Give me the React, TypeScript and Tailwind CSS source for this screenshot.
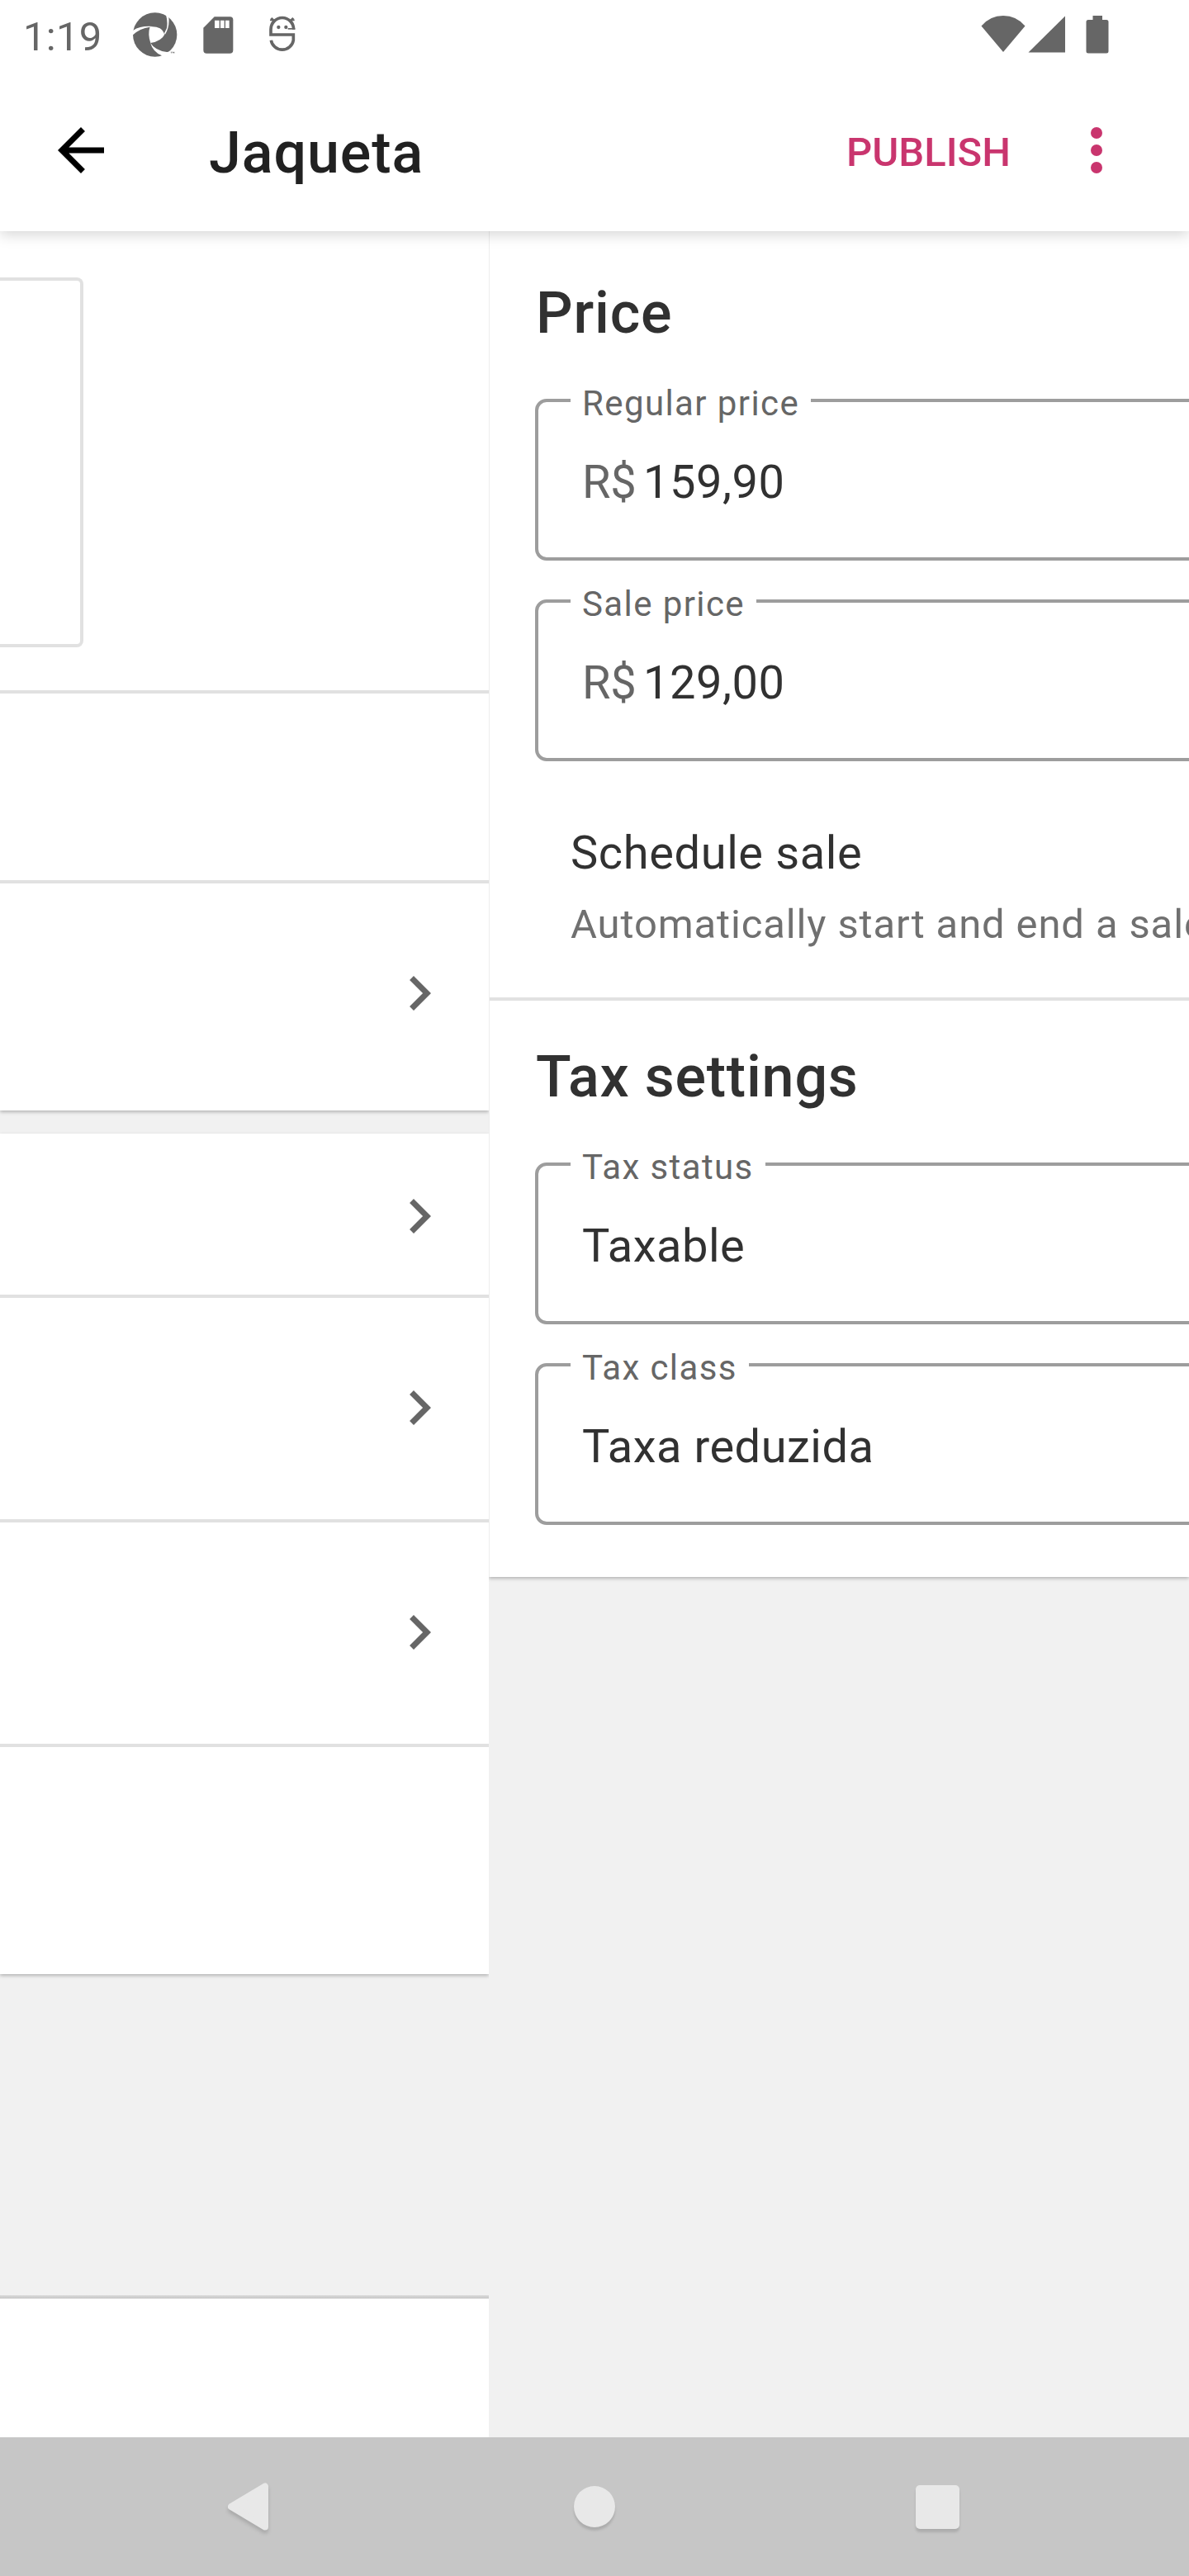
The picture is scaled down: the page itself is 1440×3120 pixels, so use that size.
import type { ReactNode } from "react";

function ApertureIcon() {
  return (
    <svg className="h-[54px] w-[54px]" viewBox="482 46 162 162">
      <circle cx="562" cy="127" r="80" fill="#666666" />
      <path
        fill="#ffffff"
        d="M544 98 Q565 96 580 104 Q590 110 597 126 Q586 150 546 157 Q535 125 544 98Z"
      />
      <path fill="#ffffff" d="M480 113 Q508 94 553 97 L544 99 Q505 104 480 130Z" />
      <path fill="#ffffff" d="M598 44 L602 55 Q609 80 605 103 L596 122 L599 126 Q616 97 612 64 L620 50Z" />
      <path fill="#ffffff" d="M545 156 Q562 184 605 190 L645 185 L645 210 L580 210 L587 203 Q555 190 545 156Z" />
      <path fill="#666666" d="M619 189h6v1.5h-2v4h-2v-4h-2zM626 189h2l1.500 3 1.500-3h2v5.500h-1.500v-3l-2 3-2-3v3h-1.500z" />
    </svg>
  );
}

function SdCardIcon() {
  return (
    <svg className="h-[45px] w-[37px]" viewBox="738 59 111 135">
      <path
        fill="#666666"
        d="M779 60 H836 Q847 60 847 72 V181 Q847 193 835 193 H751 Q739 193 739 181 V100 Z"
      />
      <path fill="#ffffff" d="M780 73h17v28h-17zM801 73h14v28h-14zM819 73h14v28h-14z" />
    </svg>
  );
}

function FaceIcon() {
  return (
    <svg className="h-[46px] w-[34px]" viewBox="974 58 102 138">
      <g fill="none" stroke="#666666" strokeWidth="11">
        <path d="M1066 108 A41 42 0 0 0 983 108 V127 H1065 V147 A41 41 0 0 1 984 147" />
        <path d="M1045 105.500 H1071" strokeWidth="5" />
        <path d="M984 67 L995 78 M1065 67 L1054 78" strokeWidth="9" />
        <path d="M980 74 H992 M1057 74 H1069" strokeWidth="5" />
      </g>
      <circle cx="1011" cy="100" r="6.500" fill="#666666" />
      <circle cx="1038" cy="100" r="6.500" fill="#666666" />
    </svg>
  );
}

function StatusBar() {
  return (
    <div className="flex h-[84px] items-start justify-between pr-[97px] pl-[28px]">
      <div className="flex">
        <span className="mt-2 w-[133px] text-[49px] leading-[73px] tracking-[0.3px] text-[#666666]">
          1:19
        </span>
        <div className="mt-[15px]">
          <ApertureIcon />
        </div>
        <div className="mt-5 ml-[31px]">
          <SdCardIcon />
        </div>
        <div className="mt-[19px] ml-[42px]">
          <FaceIcon />
        </div>
      </div>
      <div className="mt-[19px] flex">
        <svg className="h-[46px] w-[54px]" viewBox="0 0 54 46" fill="#666666">
          <path d="M27 44 L0.500 12.500 Q11 0 27 0 Q43 0 53.500 12.500Z" />
        </svg>
        <svg className="ml-[3px] h-[46px] w-[46px]" viewBox="0 0 46 46" fill="#666666">
          <path d="M0.500 44.500 L45 0.500 V44.500Z" />
        </svg>
        <svg className="ml-[24px] h-[46px] w-[28px]" viewBox="0 0 28 46" fill="#666666">
          <path d="M8.500 0 H20 V5 H25 Q27.500 5 27.500 7.500 V43 Q27.500 45.500 25 45.500 H3 Q0.500 45.500 0.500 43 V7.500 Q0.500 5 3 5 H8.500Z" />
        </svg>
      </div>
    </div>
  );
}

function Toolbar() {
  return (
    <div className="flex h-[196px] items-center">
      <svg className="ml-[56px] h-[84px] w-[84px]" viewBox="0 0 24 24">
        <path d="M20 11H7.830l5.590-5.590L12 4l-8 8 8 8 1.410-1.410L7.830 13H20v-2z" fill="#000000" />
      </svg>
      <h1 className="mt-[6px] ml-[113px] flex-1 text-[70px] leading-[82px] font-medium tracking-[0.9px] text-[#212121]">
        Jaqueta
      </h1>
      <button className="mt-[5px] w-[198px] text-left text-[49px] leading-[57px] font-medium whitespace-nowrap text-[#c9356e]">
        PUBLISH
      </button>
      <div className="mr-[105px] ml-[98px] flex flex-col gap-[7px]">
        <span className="size-[14px] rounded-full bg-[#c9356e]" />
        <span className="size-[14px] rounded-full bg-[#c9356e]" />
        <span className="size-[14px] rounded-full bg-[#c9356e]" />
      </div>
    </div>
  );
}

function Chevron() {
  return (
    <svg className="mr-[42px] ml-auto h-[84px] w-[84px]" viewBox="0 0 24 24">
      <path d="M10 6L8.590 7.410 13.170 12l-4.580 4.590L10 18l6-6z" fill="#666666" />
    </svg>
  );
}

const cardShadow = "shadow-[0_2px_4px_rgba(0,0,0,0.25)]";

function ProductPage() {
  return (
    <div className="flex w-[592px] shrink-0 flex-col overflow-hidden">
      <div className={`bg-white ${cardShadow}`}>
        <div className="h-[560px] border-b-4 border-[#e1e1e1] pt-[56px]">
          <div className="h-[448px] w-[101px] rounded-r-[8px] border-4 border-l-0 border-[#e1e1e1]" />
        </div>
        <div className="h-[230px] border-b-4 border-[#e1e1e1]" />
        <div className="h-[275px] pt-[91px]">
          <Chevron />
        </div>
      </div>
      <div className={`mt-[28px] bg-white ${cardShadow}`}>
        <div className="h-[199px] border-b-4 border-[#e1e1e1] pt-[58px]">
          <Chevron />
        </div>
        <div className="h-[272px] border-b-4 border-[#e1e1e1] pt-[91px]">
          <Chevron />
        </div>
        <div className="h-[272px] border-b-4 border-[#e1e1e1] pt-[91px]">
          <Chevron />
        </div>
        <div className="h-[275px]" />
      </div>
      <div className="mt-auto h-[172px] bg-white">
        <div className="h-1 bg-linear-to-b from-[#d9d9d9] to-[#c8c8c8]" />
      </div>
    </div>
  );
}

function Field({ label, children }: { label: string; children: ReactNode }) {
  return (
    <div className="relative h-[196px] w-[1000px] rounded-[14px] border-4 border-[#9d9d9d] pt-[61px] pl-[53px]">
      <span className="absolute -top-[23px] left-[39px] bg-white px-[14px] text-[42px] leading-[49px] tracking-[1.4px] whitespace-nowrap text-[#666666]">
        {label}
      </span>
      <div className="flex text-[56px] leading-[72px] tracking-[0.5px] whitespace-nowrap text-[#313131]">
        {children}
      </div>
    </div>
  );
}

function SectionTitle({ children }: { children: ReactNode }) {
  return (
    <h2 className="pl-px text-[70px] leading-[82px] font-medium tracking-[0.8px] text-[#313131]">{children}</h2>
  );
}

function PricingPage() {
  return (
    <div className="min-w-0 flex-1 overflow-hidden">
      <div className={`h-[1630px] border-l border-[#ededed] bg-white ${cardShadow}`}>
        <section className="h-[932px] border-b-4 border-[#e1e1e1] pt-[58px] pl-[55px]">
          <SectionTitle>Price</SectionTitle>
          <div className="mt-[63px] flex flex-col gap-[47px]">
            <Field label="Regular price">
              <span className="w-[74px] tracking-[-0.3px] text-[#666666]">R$</span>
              <span>159,90</span>
            </Field>
            <Field label="Sale price">
              <span className="w-[74px] tracking-[-0.3px] text-[#666666]">R$</span>
              <span>129,00</span>
            </Field>
          </div>
          <div className="mt-[75px] pl-[43px] whitespace-nowrap">
            <p className="text-[56px] leading-[72px] tracking-[0.6px] text-[#313131]">Schedule sale</p>
            <p className="mt-[20px] text-[49px] leading-[61px] tracking-[0.87px] text-[#707070]">
              Automatically start and end a sale
            </p>
          </div>
        </section>
        <section className="pt-[51px] pl-[55px]">
          <SectionTitle>Tax settings</SectionTitle>
          <div className="mt-[63px] flex flex-col gap-[47px]">
            <Field label="Tax status">Taxable</Field>
            <Field label="Tax class">Taxa reduzida</Field>
          </div>
        </section>
      </div>
    </div>
  );
}

function NavBar() {
  return (
    <nav className="flex h-[168px] items-center bg-[#c6c6c6]">
      <svg
        className="ml-[270px] h-[72px] w-[60px] drop-shadow-[0_4px_2px_rgba(0,0,0,0.14)]"
        viewBox="0 0 60 72"
      >
        <path
          d="M51 11.500 V60.500 L10 36Z"
          fill="#e8e8e8"
          stroke="#e8e8e8"
          strokeWidth="8"
          strokeLinejoin="round"
        />
      </svg>
      <div className="ml-[365px] size-[50px] rounded-full bg-[#e8e8e8] shadow-[0_4px_3px_rgba(0,0,0,0.13)]" />
      <div className="ml-[363.500px] size-[53px] rounded-[5px] bg-[#e8e8e8] shadow-[0_4px_3px_rgba(0,0,0,0.13)]" />
    </nav>
  );
}

export default function App() {
  return (
    <div className="flex h-[3120px] w-[1440px] flex-col overflow-hidden bg-[#f1f1f1] font-['Roboto',sans-serif]">
      <header className="z-10 shrink-0 bg-white shadow-[0_4px_16px_rgba(0,0,0,0.17)]">
        <StatusBar />
        <Toolbar />
      </header>
      <main className="flex min-h-0 flex-1 overflow-hidden">
        <ProductPage />
        <PricingPage />
      </main>
      <NavBar />
    </div>
  );
}
